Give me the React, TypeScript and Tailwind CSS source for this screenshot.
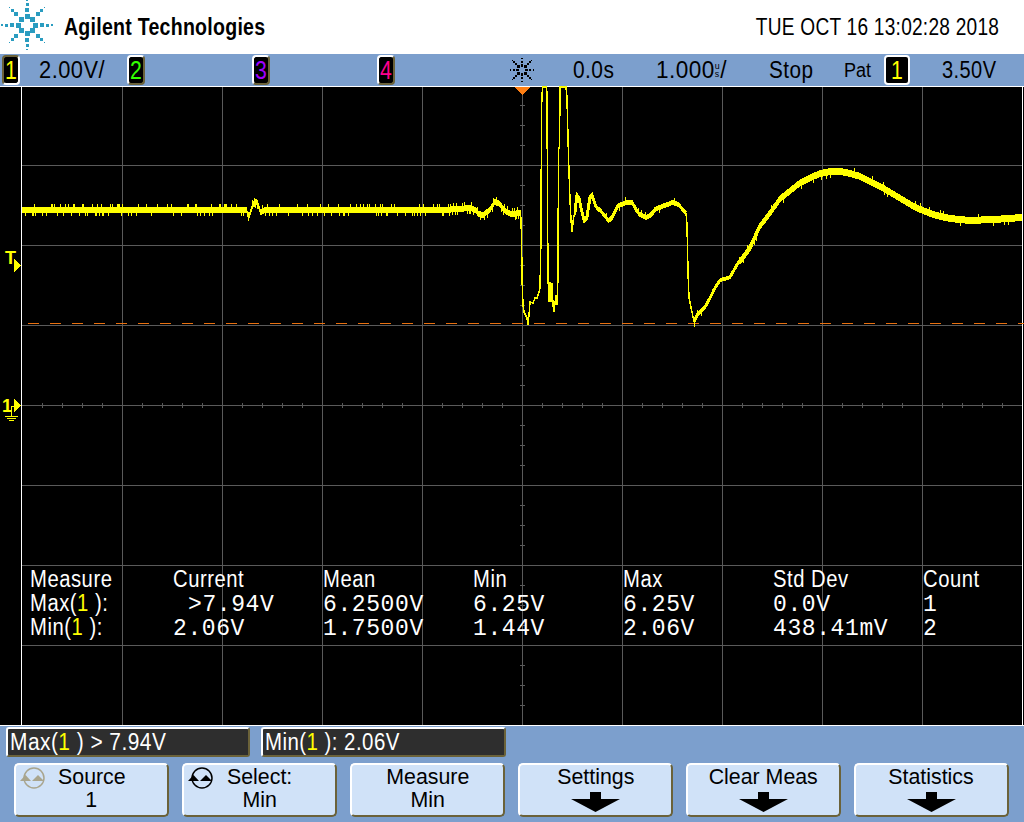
import { ReactNode } from "react";

// trace outline in page coordinates, read off the capture
const TRACE: [number, number][] = [
  [22, 209.5], [246, 209.5], [248, 218], [251, 209], [254, 201], [257, 203], [260, 212], [265, 210], [450, 209.5],
  [470, 208], [475, 210], [478, 214], [483, 215], [490, 209], [494, 202], [498, 203], [505, 211], [510, 214], [520, 213],
  [686, 213],
];
const STEEP: [number, number][] = [
  [520.5, 210], [521.5, 235], [522, 278], [523, 305], [524, 312], [527, 318], [528, 325], [529, 315], [530, 302], [533, 303],
  [535, 298], [537, 298], [539, 292], [540, 288], [541, 238], [541.5, 108], [542.5, 87], [546, 87], [547, 92], [547.5, 205],
  [548, 278], [549, 302], [550, 282], [551, 302], [552, 283], [553, 305], [554, 312], [556, 295], [557, 305], [558, 277],
  [558.5, 148], [559.5, 148], [560, 87], [566, 87], [567, 98], [568, 138], [569, 172], [570, 200], [571, 220], [572, 232],
  [573.5, 218], [575, 212],
];
const MIDDLE: [number, number][] = [
  [575, 212], [577, 195], [579, 198], [581, 208], [584, 220], [587, 217], [590, 197], [592, 195], [596, 207], [600, 210],
  [604, 215], [608, 220], [612, 217], [618, 205], [626, 202], [632, 202], [638, 213], [645, 217], [650, 215], [656, 208],
  [664, 205], [672, 202], [678, 204], [683, 210], [686, 213],
];
const DROP: [number, number][] = [
  [686, 213], [687, 225], [688, 272], [689, 298], [692, 312], [694, 322],
];
const TAIL: [number, number][] = [
  [694, 322], [697, 315], [700, 312], [705, 307], [710, 298], [715, 288], [720, 280], [730, 277], [738, 263], [750, 247],
  [760, 225], [770, 212], [780, 198], [790, 190], [800, 182], [810, 177], [820, 173], [830, 171], [840, 171], [850, 173],
  [860, 176], [870, 181], [880, 186], [890, 192], [900, 198], [910, 204], [920, 209], [930, 213], [940, 216], [950, 218],
  [960, 219], [970, 220], [980, 219.5], [1000, 218.5], [1022, 217],
];

function interp(points: [number, number][], x: number) {
  for (let i = 1; i < points.length; i++) {
    const [x0, y0] = points[i - 1];
    const [x1, y1] = points[i];
    if (x <= x1) return y0 + ((y1 - y0) * (x - x0)) / (x1 - x0 || 1);
  }
  return points[points.length - 1][1];
}

function band(points: [number, number][], from: number, to: number, half: number, spikes: number) {
  let seed = from * 97 + 13;
  const next = () => {
    seed = (seed * 1103515245 + 12345) & 0x7fffffff;
    return seed / 0x7fffffff;
  };
  let d = "";
  for (let x = from; x < to; x++) {
    const y = Math.round(interp(points, x));
    const r = next();
    const up = r < spikes ? 3 : 0;
    const down = r > 1 - spikes ? 3 : 0;
    d += `M${x + 0.5} ${y - half - up}V${y + half + down}`;
  }
  return d;
}

const poly = (points: [number, number][]) => points.map(([x, y]) => `${x},${y}`).join(" ");

const gridX = [122, 222, 322, 422, 522, 622, 722, 822, 922];
const gridY = [165, 245, 325, 405, 485, 565, 645];

function Spark({ color, className }: { color: string; className: string }) {
  const dirs = [0, 1, 2, 3, 4, 5, 6, 7];
  const rings = [
    { r: 8.3, s: 5 },
    { r: 15, s: 4 },
    { r: 20.5, s: 3 },
    { r: 25, s: 1.6 },
  ];
  return (
    <svg viewBox="0 0 54 50" className={className} fill={color} shapeRendering="crispEdges">
      {dirs.map((d) =>
        rings.map(({ r, s }) => {
          const a = (d * Math.PI) / 4;
          const cx = 27 + r * Math.cos(a);
          const cy = 25 + r * Math.sin(a);
          return <rect key={`${d}-${r}`} x={cx - s / 2} y={cy - s / 2} width={s} height={s} />;
        }),
      )}
    </svg>
  );
}

function Badge({ label, color, tone = "raised" }: { label: string; color: string; tone?: "raised" | "sunk" | "flat" }) {
  const border =
    tone === "sunk"
      ? "border-t-[#6b6239] border-l-[#6b6239] border-r-white border-b-white"
      : tone === "flat"
        ? "border-white"
        : "border-t-white border-l-white border-r-[#6b6239] border-b-[#6b6239]";
  return (
    <div className={`flex h-[30px] items-center justify-center rounded-[4px] border-2 bg-black text-[25px] leading-none ${color} ${border} ${tone === "flat" ? "w-[26px]" : "w-[18px]"}`}>
      <span className="inline-block scale-x-[0.85]">{label}</span>
    </div>
  );
}

function Knob({ color }: { color: string }) {
  return (
    <svg viewBox="0 0 28 24" className="absolute left-[3px] top-[1px] h-[24px] w-[28px]" fill={color}>
      <circle cx="15" cy="12" r="10" fill="none" stroke={color} strokeWidth="1.5" />
      <path d="M1 15L6.500 9L12 15Z" />
      <path d="M13 15L19 9L25 15Z" />
    </svg>
  );
}

function SoftKey({ top, bottom, knob }: { top: string; bottom?: string; knob?: string }) {
  return (
    <div className="relative flex h-[54px] w-[155px] flex-col items-center rounded-[5px] border-2 border-t-white border-l-white border-r-[#6b6239] border-b-[#6b6239] bg-[#d0e2f8] text-[22px] leading-[23px] text-black">
      {knob ? <Knob color={knob} /> : null}
      <div className="scale-x-[0.97]">{top}</div>
      {bottom ? (
        <div className="scale-x-[0.97]">{bottom}</div>
      ) : (
        <svg viewBox="0 0 49 20" className="mt-[4px] h-[20px] w-[49px]" fill="black">
          <path d="M19 0H30V7H49L24.500 20L0 7H19Z" />
        </svg>
      )}
    </div>
  );
}

function Src({ name, tail }: { name: string; tail: string }) {
  return (
    <>
      {name}(<span className="text-[#ffff00]">1</span> ){tail}
    </>
  );
}

function Lbl({ children }: { children: ReactNode }) {
  return <span className="inline-block origin-left scale-x-[0.88] whitespace-pre tracking-[0.6px]">{children}</span>;
}

function Num({ children }: { children: ReactNode }) {
  return <span className="whitespace-pre font-['Liberation_Mono',monospace] text-[23px] tracking-[0.6px]">{children}</span>;
}

const rows: ReactNode[][] = [
  ["Measure", "Current", "Mean", "Min", "Max", "Std Dev", "Count"].map((t) => <Lbl key={t}>{t}</Lbl>),
  [
    <Lbl key="a"><Src name="Max" tail=":" /></Lbl>,
    <span key="b" className="pl-[15px]"><Num>{">7.94V"}</Num></span>,
    <Num key="c">6.2500V</Num>,
    <Num key="d">6.25V</Num>,
    <Num key="e">6.25V</Num>,
    <Num key="f">0.0V</Num>,
    <Num key="g">1</Num>,
  ],
  [
    <Lbl key="a"><Src name="Min" tail=":" /></Lbl>,
    <Num key="b">2.06V</Num>,
    <Num key="c">1.7500V</Num>,
    <Num key="d">1.44V</Num>,
    <Num key="e">2.06V</Num>,
    <Num key="f">438.41mV</Num>,
    <Num key="g">2</Num>,
  ],
];

export default function App() {
  return (
    <div className="h-[822px] w-[1024px] overflow-hidden bg-white font-['Liberation_Sans',sans-serif] text-black">
      <header className="relative flex h-[54px] items-center">
        <Spark color="#2a9cc0" className="h-[50px] w-[54px] self-start" />
        <div className="ml-[10px] origin-left scale-x-[0.85] text-[23px] font-bold tracking-[0.3px]">Agilent Technologies</div>
        <div className="ml-auto mr-[25px] origin-right scale-x-[0.83] text-[23px] tracking-[0.3px]">TUE OCT 16 13:02:28 2018</div>
      </header>

      <div className="flex h-[32px] items-center bg-[#7c9fcd] pl-[2px] text-[23px]">
        <div className="flex w-[125px] items-center">
          <Badge label="1" color="text-[#ffff00]" tone="sunk" />
          <span className="ml-[19px] origin-left scale-x-[0.95] tracking-[0.5px]">2.00V/</span>
        </div>
        <div className="w-[125px]"><Badge label="2" color="text-[#33ff00]" /></div>
        <div className="w-[125px]"><Badge label="3" color="text-[#a000ff]" /></div>
        <div className="w-[130px]"><Badge label="4" color="text-[#ff0090]" /></div>
        <Spark color="black" className="h-[28px] w-[30px]" />
        <span className="ml-[36px] origin-left scale-x-[0.91] tracking-[0.5px]">0.0s</span>
        <span className="ml-[38px] flex origin-left scale-x-[0.98] items-center tracking-[0.5px]">
          1.000
          <span className="flex flex-col text-[9px] leading-[8px]"><span>u</span><span>s</span></span>
          /
        </span>
        <span className="ml-[40px] origin-left scale-x-[0.9] tracking-[0.5px]">Stop</span>
        <span className="ml-[26px] origin-left scale-x-[0.9] text-[20px]">Pat</span>
        <div className="ml-[10px]"><Badge label="1" color="text-[#ffff00]" tone="flat" /></div>
        <span className="ml-[32px] origin-left scale-x-[0.87] tracking-[0.5px]">3.50V</span>
      </div>

      <div className="relative h-[640px] bg-black">
        <svg viewBox="0 86 1024 640" className="absolute inset-0 h-[640px] w-[1024px]" shapeRendering="crispEdges">
          {gridX.map((x) => (
            <path key={x} d={`M${x + 0.5} 87V725`} stroke="#5a5a5a" />
          ))}
          {gridY.map((y) => (
            <path key={y} d={`M22 ${y + 0.5}H1022`} stroke="#5a5a5a" />
          ))}
          {Array.from({ length: 50 }, (_, i) => (
            <path key={i} d={`M${42 + i * 20} 403V408`} stroke="#5a5a5a" />
          ))}
          {Array.from({ length: 32 }, (_, i) => (
            <path key={i} d={`M520 ${105 + i * 20 + 0.5}H525`} stroke="#5a5a5a" />
          ))}
          <path d="M0 86.500H1024M0 725.500H1024M21.500 86V726M1022.500 86V726" stroke="white" />
          {Array.from({ length: 46 }, (_, i) => (
            <path key={i} d={`M${28 + i * 22} 323.500h11`} stroke="#e8700f" />
          ))}

          <path d={band(TRACE, 22, 521, 3, 0.16)} stroke="#ffff00" />
          <path d={band(MIDDLE, 575, 686, 2.5, 0.03)} stroke="#ffff00" />
          <path d={band(TAIL, 694, 740, 2, 0.03)} stroke="#ffff00" />
          <path d={band(TAIL, 740, 1022, 3.5, 0.06)} stroke="#ffff00" />
          <polyline points={poly(MIDDLE)} fill="none" stroke="#ffff00" strokeWidth="3" />
          <polyline points={poly(TAIL)} fill="none" stroke="#ffff00" strokeWidth="3" />
          <polyline points={poly(STEEP)} fill="none" stroke="#ffff00" strokeWidth="1.500" />
          <polyline points={poly(DROP)} fill="none" stroke="#ffff00" strokeWidth="1.500" />

          <path d="M515 87H530L522.500 95Z" fill="#ff7f14" />

          <text x="5" y="264" fill="#ffff00" fontSize="18" fontWeight="bold">T</text>
          <path d="M14 259L21.500 265.500L14 272Z" fill="#ffff00" />
          <text x="2" y="412" fill="#ffff00" fontSize="18" fontWeight="bold">1</text>
          <path d="M14 399L21.500 405.500L14 412Z" fill="#ffff00" />
          <path d="M14 406.500H11.500V416M5 416.500H18M7 418.500H16M9 420.500H14" fill="none" stroke="#ffff00" />
        </svg>

        <div className="absolute left-[30px] top-[481px] grid grid-cols-[143px_repeat(6,150px)] text-[23px] leading-[24px] text-white">
          {rows.flat().map((cell, i) => (
            <div key={i} className="h-[24px]">{cell}</div>
          ))}
        </div>
      </div>

      <div className="h-[96px] bg-[#7c9fcd]">
        <div className="flex gap-[11px] pl-[6px] pt-[1px]">
          <div className="flex h-[30px] w-[244px] items-center rounded-[3px] border-2 border-t-white border-l-white border-r-[#6b6239] border-b-[#6b6239] bg-[#2e2e2e] pl-[2px] text-[23px] tracking-[0.5px] text-white">
            <span className="origin-left scale-x-[0.91] whitespace-pre"><Src name="Max" tail={" > 7.94V"} /></span>
          </div>
          <div className="flex h-[30px] w-[245px] items-center rounded-[3px] border-2 border-t-white border-l-white border-r-[#6b6239] border-b-[#6b6239] bg-[#2e2e2e] pl-[2px] text-[23px] tracking-[0.5px] text-white">
            <span className="origin-left scale-x-[0.89] whitespace-pre"><Src name="Min" tail=": 2.06V" /></span>
          </div>
        </div>
        <div className="mt-[6px] flex gap-[13px] pl-[14px]">
          <SoftKey top="Source" bottom="1" knob="#a9a58e" />
          <SoftKey top="Select:" bottom="Min" knob="black" />
          <SoftKey top="Measure" bottom="Min" />
          <SoftKey top="Settings" />
          <SoftKey top="Clear Meas" />
          <SoftKey top="Statistics" />
        </div>
      </div>
    </div>
  );
}
